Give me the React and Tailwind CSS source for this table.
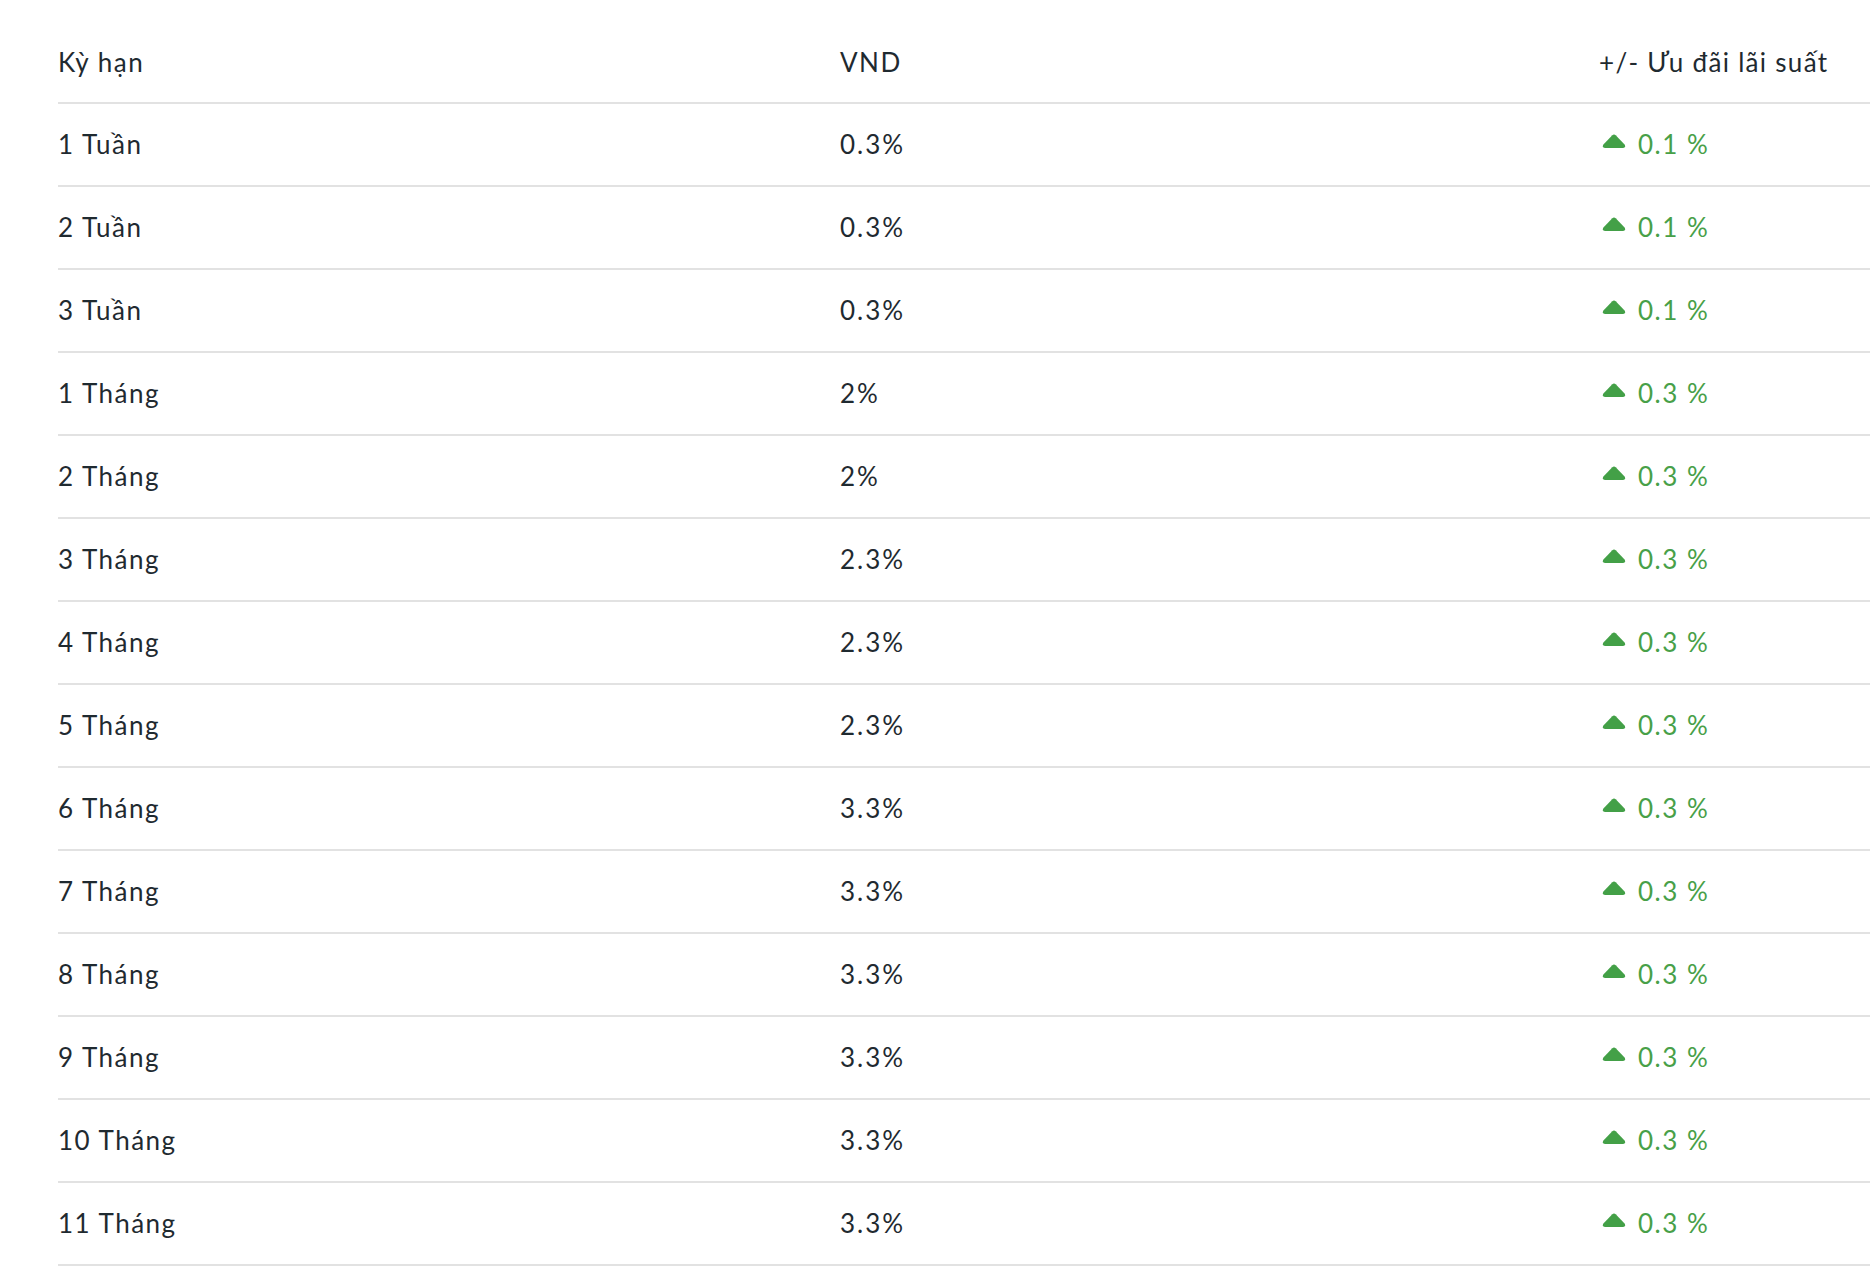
import React from 'react'

const rows = [
    ['1 Tuần', '0.3%', '0.1 %'],
    ['2 Tuần', '0.3%', '0.1 %'],
    ['3 Tuần', '0.3%', '0.1 %'],
    ['1 Tháng', '2%', '0.3 %'],
    ['2 Tháng', '2%', '0.3 %'],
    ['3 Tháng', '2.3%', '0.3 %'],
    ['4 Tháng', '2.3%', '0.3 %'],
    ['5 Tháng', '2.3%', '0.3 %'],
    ['6 Tháng', '3.3%', '0.3 %'],
    ['7 Tháng', '3.3%', '0.3 %'],
    ['8 Tháng', '3.3%', '0.3 %'],
    ['9 Tháng', '3.3%', '0.3 %'],
    ['10 Tháng', '3.3%', '0.3 %'],
    ['11 Tháng', '3.3%', '0.3 %'],
]

const UpArrow = () => (
    <svg width="24" height="14" viewBox="0 0 24 14" className="shrink-0 -mt-[8px]">
        <path d="M10.3 1.2 Q12 -0.4 13.7 1.2 L22.6 10.6 Q24.2 13.4 21 14 L3 14 Q-0.2 13.4 1.4 10.6 Z" fill="#43a047" />
    </svg>
)

const App = () => {
    return (
        <div className="min-h-screen bg-white pl-[58px] text-[26px] tracking-[1.5px] text-[#1f2a30]" style={{ fontFamily: 'Lato, "Noto Sans", sans-serif' }}>
            {/* Header */}
            <div className="grid grid-cols-[782px_759px_1fr] h-[104px] pt-[22px] items-center border-b-2 border-[#e2e2e2]">
                <div>Kỳ hạn</div>
                <div>VND</div>
                <div className="tracking-[1.3px]">+/- Ưu đãi lãi suất</div>
            </div>

            {/* Rows */}
            {rows.map(([term, rate, bonus]) => (
                <div key={term} className="grid grid-cols-[782px_759px_1fr] h-[83px] items-center border-b-2 border-[#e2e2e2]">
                    <div>{term}</div>
                    <div className="tracking-[2px]">{rate}</div>
                    <div className="flex items-center gap-[12px] pl-[3px] text-[#48a048]">
                        <UpArrow />
                        <span>{bonus}</span>
                    </div>
                </div>
            ))}
        </div>
    )
}

export default App
